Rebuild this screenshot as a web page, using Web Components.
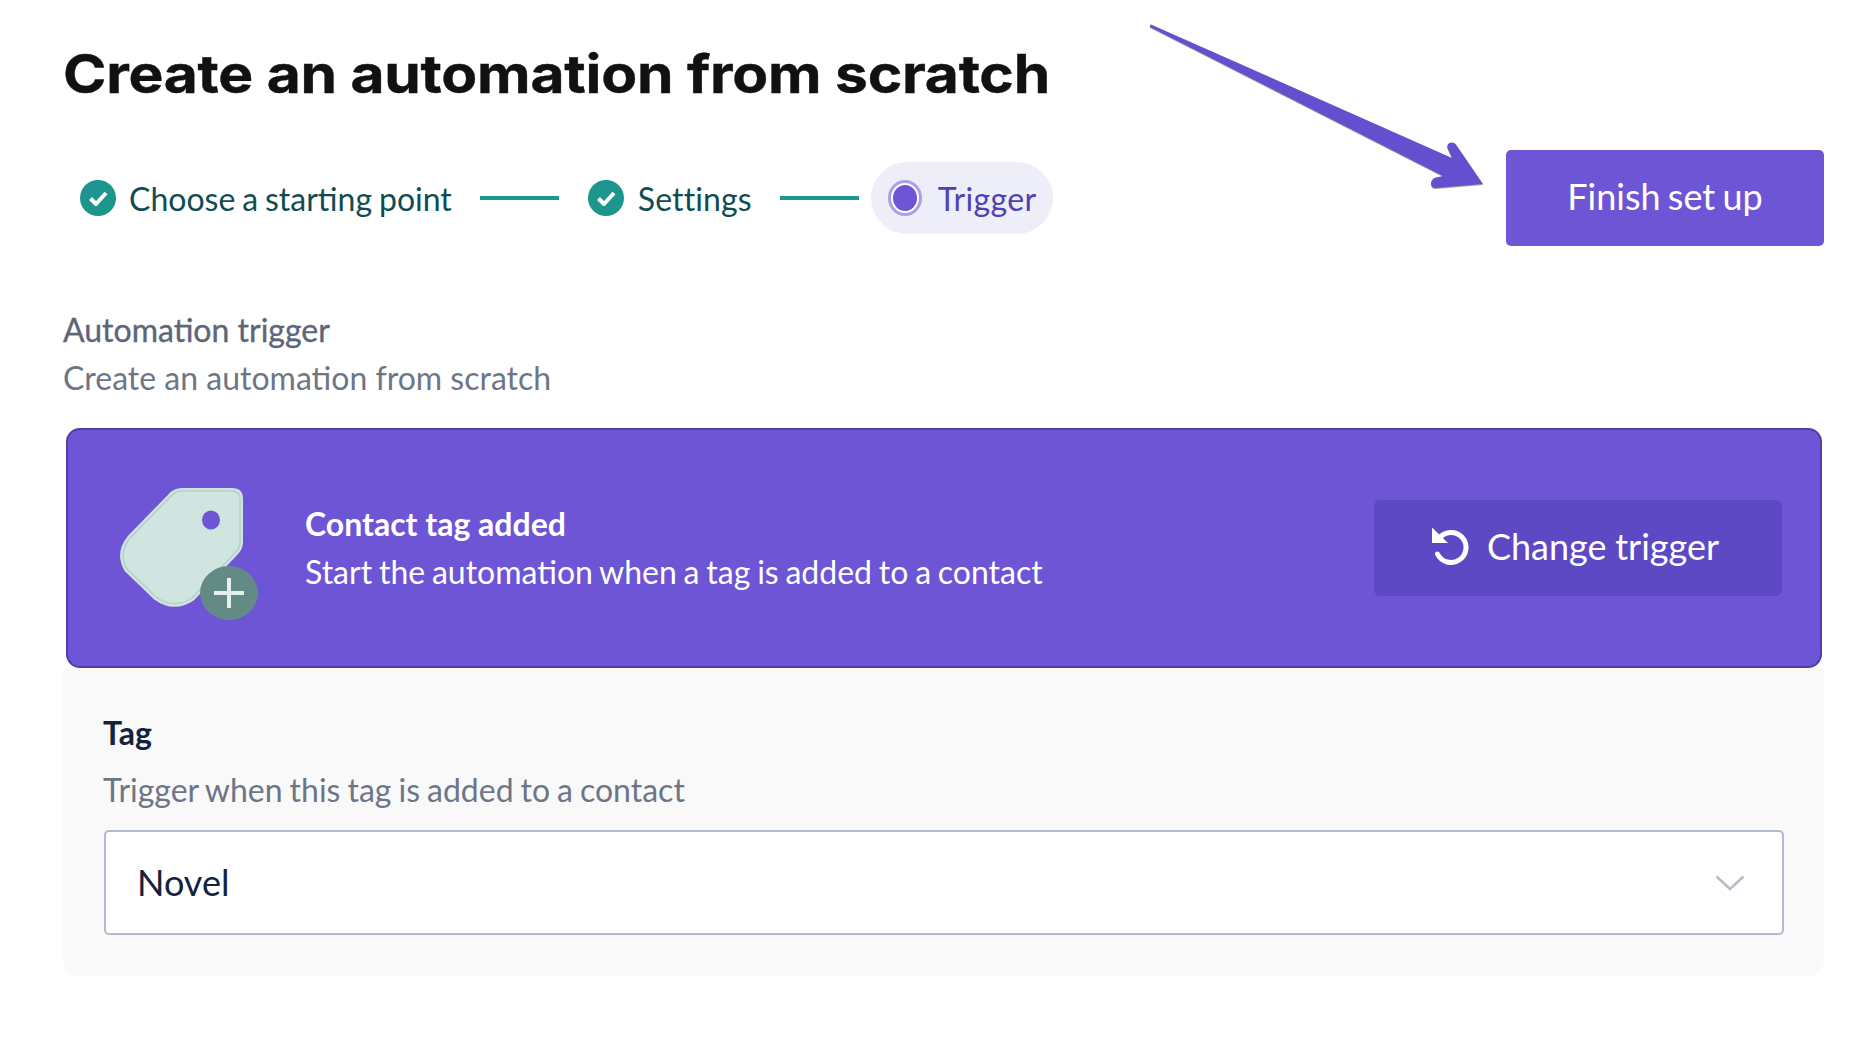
<!DOCTYPE html>
<html lang="en">
<head>
<meta charset="utf-8">
<title>Create an automation</title>
<style>
  html, body { margin: 0; background: #fff; }
  body { font-family: "Lato", "Liberation Sans", sans-serif; }
</style>
</head>
<body>
<automation-page>
  <page-header slot="header" title="Create an automation from scratch">
    <wizard-step state="done">Choose a starting point</wizard-step>
    <wizard-step state="done" connected>Settings</wizard-step>
    <wizard-step state="current" connected>Trigger</wizard-step>
    <span slot="action">Finish set up</span>
  </page-header>
  <section-heading slot="intro" label="Automation trigger" hint="Create an automation from scratch"></section-heading>
  <trigger-panel slot="panel">
    <trigger-card name="Contact tag added" description="Start the automation when a tag is added to a contact" action="Change trigger"></trigger-card>
    <tag-field label="Tag" hint="Trigger when this tag is added to a contact" value="Novel"></tag-field>
  </trigger-panel>
</automation-page>

<script>
class AutomationPage extends HTMLElement {
  constructor() {
    super();
    this.attachShadow({mode: 'open'}).innerHTML = `
      <style>
        :host { display: block; position: relative; width: 1874px; height: 1040px; box-sizing: border-box; padding: 30px 50px 0 63px; overflow: hidden; color: #111; }
        .arrow { position: absolute; left: 1140px; top: 15px; filter: drop-shadow(0 1px 0 rgba(60,50,40,.45)); }
      </style>
      <slot name="header"></slot>
      <slot name="intro"></slot>
      <slot name="panel"></slot>
      <svg class="arrow" width="350" height="180" viewBox="1140 15 350 180">
        <path fill="#6350cf" d="M1151 24.500 L1452 158 L1447.500 148 Q1446.500 143.500 1451 142.500 Q1455 142 1457 146 L1483 184 L1436 188 Q1431 188.500 1431 183 Q1431.500 178.500 1436 177.500 L1443 176 L1150 27 Q1149.500 25 1151 24.500 Z"/>
      </svg>
    `;
  }
}

class PageHeader extends HTMLElement {
  constructor() {
    super();
    this.attachShadow({mode: 'open'}).innerHTML = `
      <style>
        :host { display: block; }
        h1 { margin: 0 0 30px; height: 90px; font: 700 53px/88px "Inter", "Liberation Sans", sans-serif; letter-spacing: -.2px; color: #111; white-space: nowrap; transform: scaleX(1.107); transform-origin: left center; -webkit-text-stroke: .4px #111; }
        .row { display: flex; align-items: center; justify-content: space-between; height: 96px; }
        .steps { display: flex; align-items: center; padding-left: 17px; }
        .finish { display: flex; align-items: center; justify-content: center; box-sizing: border-box; width: 318px; height: 96px; padding-bottom: 4px; border-radius: 5px; background: #6d55d6; color: #fff; font-size: 36px; word-spacing: -2px; }
      </style>
      <h1></h1>
      <div class="row">
        <div class="steps"><slot></slot></div>
        <div class="finish"><slot name="action"></slot></div>
      </div>
    `;
    this.shadowRoot.querySelector('h1').textContent = this.getAttribute('title');
  }
}

class WizardStep extends HTMLElement {
  constructor() {
    super();
    const current = this.getAttribute('state') === 'current';
    const icon = current
      ? `<svg width="34" height="36" viewBox="0 0 34 36"><ellipse cx="17" cy="18" rx="15.500" ry="16.500" fill="#fff" stroke="#ab9eea" stroke-width="3"/><ellipse cx="17" cy="18" rx="12" ry="13" fill="#6d55d6"/></svg>`
      : `<svg width="36" height="36" viewBox="0 0 36 36"><circle cx="18" cy="18" r="18" fill="#1d968e"/><path d="M10.500 18.500l5.500 5.500 10-11" fill="none" stroke="#fff" stroke-width="4" stroke-linejoin="round"/></svg>`;
    this.attachShadow({mode: 'open'}).innerHTML = `
      <style>
        :host { display: flex; align-items: center; font-size: 32px; color: #0f4d52; white-space: nowrap; word-spacing: -1.300px; }
        .line { width: 79px; height: 4px; background: #1d968e; margin: 0 29px 0 28px; }
        .item { display: flex; align-items: center; gap: 13px; }
        svg { display: block; }
        :host([state=done][connected]) .item { gap: 14px; }
        :host([state=done][connected]) span { letter-spacing: .1px; }
        :host([state=current]) { color: #4f41b5; }
        :host([state=current]) span { letter-spacing: .4px; }
        :host([state=current]) .line { margin-right: 12px; }
        :host([state=current]) .item { height: 72px; padding: 0 16px 0 17px; gap: 16px; background: #eeeef9; border-radius: 36px; }
      </style>
      ${this.hasAttribute('connected') ? '<div class="line"></div>' : ''}
      <div class="item">${icon}<span><slot></slot></span></div>
    `;
  }
}

class SectionHeading extends HTMLElement {
  constructor() {
    super();
    this.attachShadow({mode: 'open'}).innerHTML = `
      <style>
        :host { display: block; padding-top: 60px; margin-bottom: 26px; font-size: 32px; line-height: 48px; }
        .label { color: #5d6678; -webkit-text-stroke: .35px #5d6678; }
        .hint { color: #6d7686; }
      </style>
      <div class="label">${this.getAttribute('label')}</div>
      <div class="hint">${this.getAttribute('hint')}</div>
    `;
  }
}

class TriggerPanel extends HTMLElement {
  constructor() {
    super();
    this.attachShadow({mode: 'open'}).innerHTML = `
      <style>
        :host { display: block; width: 1761px; }
      </style>
      <slot></slot>
    `;
  }
}

class TriggerCard extends HTMLElement {
  constructor() {
    super();
    this.attachShadow({mode: 'open'}).innerHTML = `
      <style>
        :host { display: flex; align-items: center; box-sizing: border-box; height: 240px; margin: 0 2px 0 3px; padding: 0 38px 0 50px; background: #6d55d6; border: 2px solid #4c3fa8; border-radius: 14px; color: #fff; font-size: 32px; }
        svg { display: block; flex: none; }
        .text { flex: 1; margin-left: 47px; line-height: 48px; }
        .name { font-weight: 700; }
        .desc { word-spacing: -1.400px; }
        .change { display: flex; align-items: center; justify-content: center; gap: 18px; box-sizing: border-box; width: 408px; height: 96px; padding: 0 6px 4px 0; border-radius: 6px; background: #5c49c3; font-size: 36px; word-spacing: -.5px; }
      </style>
      <tag-icon></tag-icon>
      <div class="text">
        <div class="name">${this.getAttribute('name')}</div>
        <div class="desc">${this.getAttribute('description')}</div>
      </div>
      <div class="change">
        <svg width="38" height="38" viewBox="0 0 38 38"><path d="M8 11.500A15 15 0 1 1 6.500 27" fill="none" stroke="#fff" stroke-width="5" stroke-linecap="round"/><path d="M1 0.500v15.500h16z" fill="#fff"/></svg>
        <span>${this.getAttribute('action')}</span>
      </div>
    `;
  }
}

class TagIcon extends HTMLElement {
  constructor() {
    super();
    const shape = 'M64 11 L114 11 Q122 11 122 19 L122 62 Q122 68 117 73 L74 118 Q56 130 38 117 L9 89 Q0 73 12 58 L52 17 Q57 11 64 11 Z';
    this.attachShadow({mode: 'open'}).innerHTML = `
      <style>
        :host { display: block; flex: none; width: 140px; height: 136px; }
        svg { display: block; overflow: visible; }
      </style>
      <svg width="140" height="136" viewBox="0 0 140 136">
        <path d="${shape}" fill="#d0e5df" stroke="#d0e5df" stroke-width="6" stroke-linejoin="round"/>
        <path d="${shape}" fill="none" stroke="#b5cfc8" stroke-width="1.500"/>
        <ellipse cx="93" cy="40" rx="9" ry="9.500" fill="#6d55d6"/>
        <ellipse cx="111" cy="113" rx="29" ry="27" fill="#648a85"/>
        <path d="M111 98v30M96 113h30" stroke="#e4f0ec" stroke-width="4"/>
      </svg>
    `;
  }
}

class TagField extends HTMLElement {
  constructor() {
    super();
    this.attachShadow({mode: 'open'}).innerHTML = `
      <style>
        :host { display: block; box-sizing: border-box; height: 308px; padding: 41px 40px 0 40px; background: #f9f9fa; border-radius: 0 0 16px 16px; }
        .label { color: #14233c; font-size: 32px; font-weight: 700; line-height: 48px; }
        .hint { color: #6d7686; font-size: 32px; line-height: 48px; margin-top: 9px; word-spacing: -1.200px; }
        .select { display: flex; align-items: center; justify-content: space-between; box-sizing: border-box; height: 105px; margin: 16px 0 0 1px; padding: 0 37px 2px 31px; background: #fff; border: 2px solid #b0bbce; border-radius: 5px; color: #14233c; font-size: 36px; }
        svg { display: block; margin-top: 2px; }
      </style>
      <div class="label">${this.getAttribute('label')}</div>
      <div class="hint">${this.getAttribute('hint')}</div>
      <div class="select">
        <span>${this.getAttribute('value')}</span>
        <svg width="30" height="16" viewBox="0 0 30 16"><path d="M1.500 1.500L15 14 28.500 1.500" fill="none" stroke="#b5bdca" stroke-width="2.500"/></svg>
      </div>
    `;
  }
}

customElements.define('automation-page', AutomationPage);
customElements.define('page-header', PageHeader);
customElements.define('wizard-step', WizardStep);
customElements.define('section-heading', SectionHeading);
customElements.define('trigger-panel', TriggerPanel);
customElements.define('tag-icon', TagIcon);
customElements.define('trigger-card', TriggerCard);
customElements.define('tag-field', TagField);
</script>
</body>
</html>
